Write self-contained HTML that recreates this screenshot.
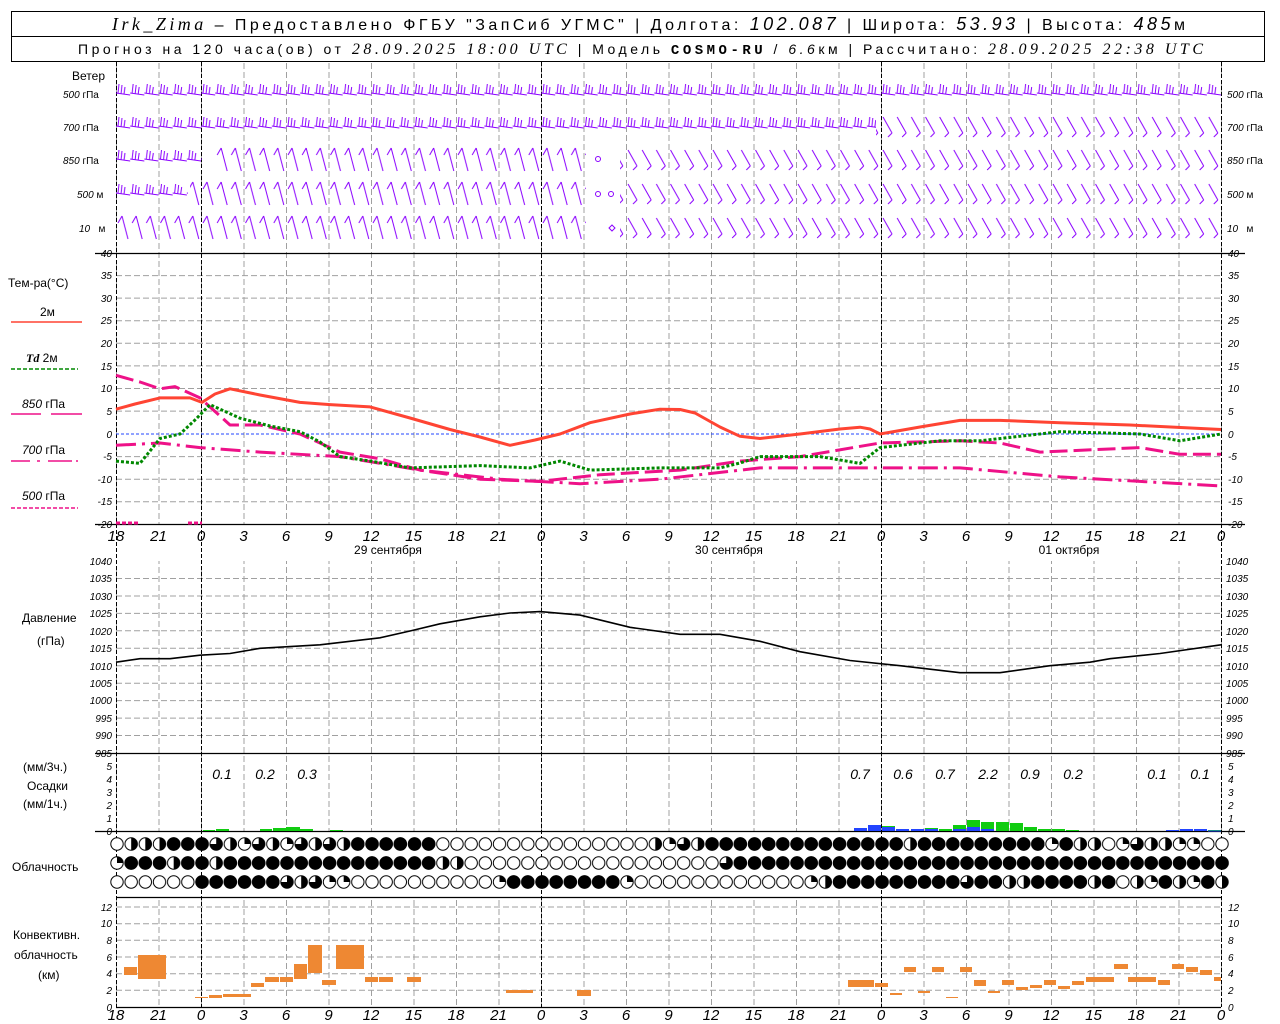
<!DOCTYPE html>
<html><head><meta charset="utf-8"><style>
html,body{margin:0;padding:0;background:#fff;}
svg{display:block}
.l{font-family:"Liberation Sans",sans-serif;font-size:12px;fill:#000}
.t{font-family:"Liberation Sans",sans-serif;font-size:10px;font-style:italic;fill:#000}
.x{font-family:"Liberation Sans",sans-serif;font-size:15px;font-style:italic;fill:#000}
.p{font-family:"Liberation Sans",sans-serif;font-size:14px;font-style:italic;fill:#000}
</style></head><body>
<svg width="1280" height="1024" viewBox="0 0 1280 1024" xmlns="http://www.w3.org/2000/svg">
<defs>
<pattern id="vg" patternUnits="userSpaceOnUse" x="116" y="0" width="42.5" height="1024">
<line x1="0.5" y1="0" x2="0.5" y2="1024" stroke="#a0a0a0" stroke-dasharray="6,3"/>
</pattern>
<pattern id="co" patternUnits="userSpaceOnUse" x="110" y="-7" width="14.1667" height="14">
<circle cx="7" cy="7" r="6.2" fill="#fff" stroke="#000" stroke-width="1"/>
</pattern>
<pattern id="cf" patternUnits="userSpaceOnUse" x="110" y="-7" width="14.1667" height="14">
<circle cx="7" cy="7" r="6.2" fill="#000" stroke="#000" stroke-width="1"/>
</pattern>
<pattern id="bh" patternUnits="userSpaceOnUse" x="116" y="-20" width="14.1667" height="30">
<g stroke="#8a00ff" stroke-width="1" fill="none">
<line x1="0" y1="19" x2="14.2" y2="21"/>
<line x1="2" y1="19" x2="3" y2="10"/><line x1="5" y1="20" x2="6" y2="11"/><line x1="8" y1="20" x2="9" y2="13"/>
</g></pattern>
<pattern id="ba" patternUnits="userSpaceOnUse" x="116" y="-15" width="14.1667" height="30">
<g stroke="#8a00ff" stroke-width="1" fill="none">
<line x1="6" y1="3" x2="12" y2="26"/><line x1="6" y1="3" x2="2" y2="10"/>
</g></pattern>
<pattern id="bb" patternUnits="userSpaceOnUse" x="116" y="-15" width="14.1667" height="30">
<g stroke="#8a00ff" stroke-width="1" fill="none">
<line x1="2" y1="5" x2="11" y2="21"/><line x1="11" y1="21" x2="7" y2="25"/>
</g></pattern>
<path id="h" d="M0,-6.2A6.2,6.2 0 0 1 0,6.2Z" fill="#000"/>
<path id="q" d="M0,0V-6.2A6.2,6.2 0 0 1 6.2,0Z" fill="#000"/>
<path id="tq" d="M0,0V-6.2A6.2,6.2 0 1 1 -6.2,0Z" fill="#000"/>
</defs>

<!-- header -->
<rect x="11.5" y="11.5" width="1253" height="50" fill="none" stroke="#000"/>
<line x1="11" y1="36.5" x2="1265" y2="36.5" stroke="#000"/>
<text x="112" y="30" font-family="Liberation Sans,sans-serif" font-size="16" textLength="1073" lengthAdjust="spacing"><tspan font-family="Liberation Serif,serif" font-style="italic" font-size="18">Irk_Zima</tspan> – Предоставлено ФГБУ "ЗапСиб УГМС" | Долгота: <tspan font-style="italic" font-size="18">102.087</tspan> | Широта: <tspan font-style="italic" font-size="18">53.93</tspan> | Высота: <tspan font-style="italic" font-size="18">485</tspan>м</text>
<text x="78" y="54" font-family="Liberation Sans,sans-serif" font-size="14" textLength="1125" lengthAdjust="spacing">Прогноз на 120 часа(ов) от <tspan font-style="italic" font-family="Liberation Serif,serif" font-size="16">28.09.2025 18:00 UTC</tspan>  | Модель <tspan font-weight="bold" font-family="Liberation Mono,monospace">COSMO-RU</tspan> / <tspan font-style="italic">6.6</tspan>км | Рассчитано: <tspan font-style="italic" font-family="Liberation Serif,serif" font-size="16">28.09.2025 22:38 UTC</tspan></text>

<!-- vertical gray grid -->
<rect x="116" y="62" width="1106" height="191" fill="url(#vg)"/>
<rect x="116" y="253" width="1106" height="271" fill="url(#vg)"/>
<rect x="116" y="561" width="1106" height="192" fill="url(#vg)"/>
<rect x="116" y="753" width="1106" height="78" fill="url(#vg)"/>
<rect x="116" y="897" width="1106" height="110" fill="url(#vg)"/>

<!-- horizontal grid -->
<g stroke="#a0a0a0" stroke-dasharray="6,3" fill="none">
<path d="M116 275.6H1221M116 298.1H1221M116 320.7H1221M116 343.3H1221M116 365.9H1221M116 388.5H1221M116 411.1H1221M116 456.6H1221M116 479.2H1221M116 501.8H1221"/>
<path d="M116 578.5H1221M116 596H1221M116 613.4H1221M116 630.8H1221M116 648.3H1221M116 665.7H1221M116 683.2H1221M116 700.6H1221M116 718.1H1221M116 735.5H1221"/>
<path d="M116 907H1221M116 923.7H1221M116 940.3H1221M116 957H1221M116 973.7H1221M116 990.3H1221"/>
</g>
<g stroke="#000" stroke-dasharray="4,2">
<path d="M201.5 62V1007M541.5 62V1007M881.5 62V1007M116.5 62V1007M1221.5 62V1007"/>
</g>
<g stroke="#000" stroke-width="1.2">
<path d="M95 253.5H1245M95 524.5H1245M95 753.5H1245M95 831.5H1245M116 897.5H1221M116 1007.5H1221"/>
</g>

<!-- wind -->
<text class="l" x="72" y="80">Ветер</text>
<text class="t" x="63" y="98">500 <tspan font-style="normal">гПа</tspan></text>
<text class="t" x="63" y="131">700 <tspan font-style="normal">гПа</tspan></text>
<text class="t" x="63" y="164">850 <tspan font-style="normal">гПа</tspan></text>
<text class="t" x="77" y="198">500 <tspan font-style="normal">м</tspan></text>
<text class="t" x="79" y="232">10 <tspan font-style="normal">&#160;&#160;м</tspan></text>
<text class="t" x="1227" y="98">500 <tspan font-style="normal">гПа</tspan></text>
<text class="t" x="1227" y="131">700 <tspan font-style="normal">гПа</tspan></text>
<text class="t" x="1227" y="164">850 <tspan font-style="normal">гПа</tspan></text>
<text class="t" x="1227" y="198">500 <tspan font-style="normal">м</tspan></text>
<text class="t" x="1227" y="232">10 <tspan font-style="normal">&#160;&#160;м</tspan></text>
<g transform="translate(0,94)"><rect x="116" y="-20" width="1105" height="30" fill="url(#bh)"/></g>
<g transform="translate(0,127)"><rect x="116" y="-20" width="760" height="30" fill="url(#bh)"/><rect x="876" y="-15" width="345" height="30" fill="url(#bb)"/></g>
<g transform="translate(0,160)"><rect x="116" y="-20" width="86" height="30" fill="url(#bh)"/><rect x="216" y="-15" width="370" height="30" fill="url(#ba)"/><rect x="620" y="-15" width="601" height="30" fill="url(#bb)"/></g>
<g transform="translate(0,194)"><rect x="116" y="-20" width="72" height="30" fill="url(#bh)"/><rect x="190" y="-15" width="396" height="30" fill="url(#ba)"/><rect x="620" y="-15" width="601" height="30" fill="url(#bb)"/></g>
<g transform="translate(0,228)"><rect x="116" y="-15" width="470" height="30" fill="url(#ba)"/><rect x="620" y="-15" width="601" height="30" fill="url(#bb)"/></g>
<g fill="none" stroke="#8a00ff"><circle cx="598" cy="159" r="2.5"/><circle cx="598" cy="194" r="2.5"/><circle cx="611" cy="194" r="2.5"/><path d="M612 225l3 3-3 3-3-3z"/></g>

<!-- temperature -->
<text class="l" x="8" y="287">Тем-ра(°С)</text>
<text class="l" x="40" y="316">2м</text>
<line x1="11" y1="322" x2="82" y2="322" stroke="#ff4433" stroke-width="1.5"/>
<text class="l" x="26" y="362"><tspan font-style="italic" font-weight="bold" font-family="Liberation Serif,serif">Td</tspan>  2м</text>
<line x1="11" y1="369" x2="78" y2="369" stroke="#008800" stroke-width="1.5" stroke-dasharray="4,2"/>
<text class="l" x="22" y="408"><tspan font-style="italic">850</tspan> гПа</text>
<path d="M11 414H41M51 414H82" stroke="#ee1188" stroke-width="1.5"/>
<text class="l" x="22" y="454"><tspan font-style="italic">700</tspan> гПа</text>
<path d="M11 461H30M37 461H40M48 461H72M76 461H78" stroke="#ee1188" stroke-width="1.5"/>
<text class="l" x="22" y="500"><tspan font-style="italic">500</tspan> гПа</text>
<line x1="11" y1="508" x2="78" y2="508" stroke="#ee1188" stroke-width="1.5" stroke-dasharray="4,2"/>
<g class="t" text-anchor="end">
<text x="112" y="257">40</text><text x="112" y="279">35</text><text x="112" y="302">30</text><text x="112" y="324">25</text><text x="112" y="347">20</text><text x="112" y="370">15</text><text x="112" y="392">10</text><text x="112" y="415">5</text><text x="112" y="438">0</text><text x="112" y="460">-5</text><text x="112" y="483">-10</text><text x="112" y="505">-15</text><text x="112" y="528">-20</text>
</g>
<g class="t">
<text x="1228" y="257">40</text><text x="1228" y="279">35</text><text x="1228" y="302">30</text><text x="1228" y="324">25</text><text x="1228" y="347">20</text><text x="1228" y="370">15</text><text x="1228" y="392">10</text><text x="1228" y="415">5</text><text x="1228" y="438">0</text><text x="1228" y="460">-5</text><text x="1228" y="483">-10</text><text x="1228" y="505">-15</text><text x="1228" y="528">-20</text>
</g>
<line x1="116" y1="434" x2="1221" y2="434" stroke="#2244ff" stroke-dasharray="3,2"/>
<g fill="none" stroke-linejoin="round">
<polyline stroke="#ee1188" stroke-width="3" stroke-dasharray="18,6" points="116,375.3 140,382 160,388.8 175,386.6 200,397.9 230,425 260,425 300,434 340,452.1 380,458.8 420,470.1 480,479.2 540,481.4 600,474.7 680,470.1 740,461.1 800,456.6 880,443 960,440.8 1000,443 1040,452.1 1140,447.6 1180,454.3 1221,454.3"/>
<polyline stroke="#ee1188" stroke-width="3" stroke-dasharray="20,6,3,6" points="116,445.3 160,443 200,447.6 260,452.1 340,456.6 420,470.1 500,479.2 580,483.7 660,479.2 760,467.9 880,467.9 960,467.9 1060,476.9 1140,481.4 1221,486"/>
<polyline stroke="#ff4433" stroke-width="3" points="116,409.2 135,404 160,397.9 190,397.9 202,402.4 215,394 230,388.8 260,395 300,402.4 330,404.6 370,406.9 410,418 450,429.5 480,437 510,445.3 535,440 560,434 590,422.7 630,414 660,409.2 680,409.5 695,413 720,427 740,436.3 760,438.5 800,434 840,429 860,427.2 870,429 880,434 920,427 960,420.4 1000,420.4 1060,422.7 1130,425 1221,429.5"/>
<polyline stroke="#008800" stroke-width="3" stroke-dasharray="3,2" points="116,461.1 140,463.4 160,438.5 180,434 195,420 210,404.6 240,418.2 270,426 300,431.7 320,442 340,456.6 370,461 410,467.9 480,465.6 530,467.9 560,461.1 590,470.1 660,467.9 720,467.9 740,463 760,456.6 820,456.6 860,463.4 880,447.6 940,440.8 980,440.8 1060,431.7 1140,434 1180,440.8 1221,434"/>
<path d="M116 523H140M188 523H202" stroke="#ee1188" stroke-width="3" stroke-dasharray="4,2"/>
</g>
<g class="x" text-anchor="middle">
<text x="116" y="541">18</text><text x="158.5" y="541">21</text><text x="201" y="541">0</text><text x="243.5" y="541">3</text><text x="286" y="541">6</text><text x="328.5" y="541">9</text><text x="371" y="541">12</text><text x="413.5" y="541">15</text><text x="456" y="541">18</text><text x="498.5" y="541">21</text><text x="541" y="541">0</text><text x="583.5" y="541">3</text><text x="626" y="541">6</text><text x="668.5" y="541">9</text><text x="711" y="541">12</text><text x="753.5" y="541">15</text><text x="796" y="541">18</text><text x="838.5" y="541">21</text><text x="881" y="541">0</text><text x="923.5" y="541">3</text><text x="966" y="541">6</text><text x="1008.5" y="541">9</text><text x="1051" y="541">12</text><text x="1093.5" y="541">15</text><text x="1136" y="541">18</text><text x="1178.5" y="541">21</text><text x="1221" y="541">0</text>
</g>
<g class="l" text-anchor="middle" font-size="12">
<text x="388" y="554">29 сентября</text><text x="729" y="554">30 сентября</text><text x="1069" y="554">01 октября</text>
</g>

<!-- pressure -->
<text class="l" x="22" y="622">Давление</text>
<text class="l" x="37" y="645">(гПа)</text>
<g class="t" text-anchor="end">
<text x="112" y="565">1040</text><text x="112" y="582">1035</text><text x="112" y="600">1030</text><text x="112" y="617">1025</text><text x="112" y="635">1020</text><text x="112" y="652">1015</text><text x="112" y="670">1010</text><text x="112" y="687">1005</text><text x="112" y="704">1000</text><text x="112" y="722">995</text><text x="112" y="739">990</text><text x="112" y="757">985</text>
</g>
<g class="t">
<text x="1226" y="565">1040</text><text x="1226" y="582">1035</text><text x="1226" y="600">1030</text><text x="1226" y="617">1025</text><text x="1226" y="635">1020</text><text x="1226" y="652">1015</text><text x="1226" y="670">1010</text><text x="1226" y="687">1005</text><text x="1226" y="704">1000</text><text x="1226" y="722">995</text><text x="1226" y="739">990</text><text x="1226" y="757">985</text>
</g>
<polyline fill="none" stroke="#000" stroke-width="1.6" points="116,662.2 140,658.7 170,658.7 200,655.2 230,653.5 260,648.3 320,644.8 380,637.8 410,631 440,623.8 480,616.8 510,613 540,611.6 580,615.1 630,627.3 680,634.3 720,634.3 760,641.3 800,651.7 850,660.5 900,665.7 960,672.7 1000,672.7 1050,665.7 1090,662.2 1110,658.7 1160,653.5 1221,644.8"/>

<!-- precip -->
<text class="l" x="23" y="771">(мм/3ч.)</text>
<text class="l" x="27" y="790">Осадки</text>
<text class="l" x="23" y="808">(мм/1ч.)</text>
<g class="t" text-anchor="end">
<text x="112" y="770">5</text><text x="112" y="783">4</text><text x="112" y="796">3</text><text x="112" y="809">2</text><text x="112" y="822">1</text><text x="112" y="835">0</text>
</g>
<g class="t">
<text x="1228" y="770">5</text><text x="1228" y="783">4</text><text x="1228" y="796">3</text><text x="1228" y="809">2</text><text x="1228" y="822">1</text><text x="1228" y="835">0</text>
</g>
<g class="p" text-anchor="middle">
<text x="222" y="779">0.1</text><text x="265" y="779">0.2</text><text x="307" y="779">0.3</text>
<text x="860" y="779">0.7</text><text x="903" y="779">0.6</text><text x="945" y="779">0.7</text><text x="988" y="779">2.2</text><text x="1030" y="779">0.9</text><text x="1073" y="779">0.2</text><text x="1157" y="779">0.1</text><text x="1200" y="779">0.1</text>
</g>
<g fill="#11cc11">
<rect x="203" y="830" width="12" height="1"/><rect x="216" y="829" width="13" height="2"/><rect x="260" y="829" width="12" height="2"/><rect x="273" y="828" width="13" height="3"/><rect x="286" y="827" width="14" height="4"/><rect x="300" y="829" width="13" height="2"/><rect x="330" y="830" width="13" height="1"/>
<rect x="882" y="826" width="13" height="5"/><rect x="925" y="828" width="13" height="3"/><rect x="939" y="829" width="13" height="2"/><rect x="953" y="825" width="13" height="6"/><rect x="967" y="820" width="13" height="11"/><rect x="981" y="822" width="13" height="9"/><rect x="996" y="822" width="13" height="9"/><rect x="1010" y="823" width="13" height="8"/><rect x="1024" y="827" width="13" height="4"/><rect x="1038" y="829" width="13" height="2"/><rect x="1052" y="829" width="13" height="2"/><rect x="1066" y="830" width="13" height="1"/><rect x="1208" y="830" width="13" height="1"/>
</g>
<g fill="#2244ff">
<rect x="854" y="828" width="13" height="3"/><rect x="868" y="825" width="13" height="6"/><rect x="882" y="827" width="13" height="4"/><rect x="896" y="829" width="13" height="2"/><rect x="911" y="829" width="13" height="2"/><rect x="925" y="829" width="13" height="2"/><rect x="953" y="829" width="13" height="2"/><rect x="967" y="827" width="13" height="4"/><rect x="981" y="829" width="13" height="2"/><rect x="1166" y="830" width="13" height="1"/><rect x="1180" y="829" width="13" height="2"/><rect x="1194" y="829" width="13" height="2"/><rect x="1208" y="830.5" width="13" height="1"/>
</g>

<!-- cloudiness -->
<text class="l" x="12" y="871">Облачность</text>
<g transform="translate(0,844)">
<rect x="110" y="-7" width="1119" height="14" fill="url(#co)"/>
<rect x="166.7" y="-7" width="42.5" height="14" fill="url(#cf)"/>
<rect x="350.8" y="-7" width="85" height="14" fill="url(#cf)"/>
<rect x="705" y="-7" width="198.3" height="14" fill="url(#cf)"/>
<rect x="917.5" y="-7" width="127.5" height="14" fill="url(#cf)"/>
<rect x="1059.2" y="-7" width="14.17" height="14" fill="url(#cf)"/>
<use href="#h" x="131.2"/><use href="#h" x="145.3"/><use href="#h" x="159.5"/><use href="#tq" x="216.2"/><use href="#h" x="230.3"/><use href="#q" x="244.5"/><use href="#tq" x="258.7"/><use href="#h" x="272.8"/><use href="#q" x="287"/><use href="#tq" x="301.2"/><use href="#h" x="315.3"/><use href="#tq" x="329.5"/><use href="#h" x="343.7"/>
<use href="#h" x="655.3"/><use href="#q" x="669.5"/><use href="#tq" x="683.7"/><use href="#h" x="697.8"/><use href="#h" x="910.3"/><use href="#q" x="1052"/><use href="#h" x="1080.3"/><use href="#h" x="1094.5"/><use href="#q" x="1122.8"/><use href="#tq" x="1137"/><use href="#h" x="1151.2"/><use href="#h" x="1165.3"/><use href="#q" x="1179.5"/><use href="#q" x="1193.7"/>
</g>
<g transform="translate(0,863)">
<rect x="110" y="-7" width="1119" height="14" fill="url(#co)"/>
<rect x="124.2" y="-7" width="42.5" height="14" fill="url(#cf)"/>
<rect x="180.8" y="-7" width="28.33" height="14" fill="url(#cf)"/>
<rect x="223.3" y="-7" width="212.5" height="14" fill="url(#cf)"/>
<rect x="733.3" y="-7" width="495.8" height="14" fill="url(#cf)"/>
<use href="#q" x="117"/><use href="#h" x="173.7"/><use href="#h" x="216.2"/><use href="#h" x="442.8"/><use href="#h" x="457"/><use href="#tq" x="726.2"/>
</g>
<g transform="translate(0,882)">
<rect x="110" y="-7" width="1119" height="14" fill="url(#co)"/>
<rect x="195" y="-7" width="85" height="14" fill="url(#cf)"/>
<rect x="506.7" y="-7" width="113.3" height="14" fill="url(#cf)"/>
<rect x="832.5" y="-7" width="127.5" height="14" fill="url(#cf)"/>
<rect x="974.2" y="-7" width="28.33" height="14" fill="url(#cf)"/>
<rect x="1030.8" y="-7" width="56.67" height="14" fill="url(#cf)"/>
<rect x="1101.7" y="-7" width="14.17" height="14" fill="url(#cf)"/>
<rect x="1158.3" y="-7" width="14.17" height="14" fill="url(#cf)"/>
<rect x="1200.8" y="-7" width="14.17" height="14" fill="url(#cf)"/>
<use href="#tq" x="287"/><use href="#h" x="301.2"/><use href="#tq" x="315.3"/><use href="#q" x="329.5"/><use href="#q" x="343.7"/><use href="#q" x="499.5"/><use href="#q" x="627"/><use href="#q" x="811.2"/><use href="#h" x="825.3"/><use href="#tq" x="967"/><use href="#h" x="1009.5"/><use href="#h" x="1023.7"/><use href="#h" x="1094.5"/><use href="#h" x="1137"/><use href="#q" x="1151.2"/><use href="#h" x="1179.5"/><use href="#q" x="1193.7"/><use href="#h" x="1222"/>
</g>

<!-- convective -->
<text class="l" x="13" y="939">Конвективн.</text>
<text class="l" x="14" y="959">облачность</text>
<text class="l" x="38" y="979">(км)</text>
<g class="t" text-anchor="end">
<text x="112" y="911">12</text><text x="112" y="927">10</text><text x="112" y="944">8</text><text x="112" y="961">6</text><text x="112" y="977">4</text><text x="112" y="994">2</text><text x="112" y="1011">0</text>
</g>
<g class="t">
<text x="1228" y="911">12</text><text x="1228" y="927">10</text><text x="1228" y="944">8</text><text x="1228" y="961">6</text><text x="1228" y="977">4</text><text x="1228" y="994">2</text><text x="1228" y="1011">0</text>
</g>
<g fill="#ee8833">
<rect x="124" y="967" width="13" height="8"/><rect x="138" y="955" width="28" height="24"/><rect x="195" y="997" width="13" height="1"/><rect x="209" y="995" width="13" height="3"/><rect x="223" y="994" width="28" height="3"/><rect x="251" y="983" width="13" height="4"/><rect x="265" y="977" width="14" height="5"/><rect x="280" y="977" width="13" height="5"/><rect x="294" y="964" width="13" height="15"/><rect x="308" y="945" width="14" height="28"/><rect x="322" y="980" width="14" height="5"/><rect x="336" y="945" width="28" height="24"/><rect x="365" y="977" width="13" height="5"/><rect x="379" y="977" width="14" height="5"/><rect x="407" y="977" width="14" height="5"/><rect x="506" y="990" width="27" height="3"/><rect x="577" y="990" width="14" height="6"/>
<rect x="848" y="980" width="26" height="7"/><rect x="875" y="983" width="13" height="4"/><rect x="890" y="993" width="12" height="2"/><rect x="904" y="967" width="12" height="5"/><rect x="918" y="991" width="12" height="2"/><rect x="932" y="967" width="12" height="5"/><rect x="946" y="997" width="12" height="1"/><rect x="960" y="967" width="12" height="5"/><rect x="974" y="980" width="12" height="6"/><rect x="988" y="991" width="12" height="2"/><rect x="1002" y="980" width="12" height="5"/><rect x="1016" y="987" width="12" height="3"/><rect x="1030" y="985" width="12" height="3"/><rect x="1044" y="980" width="12" height="5"/><rect x="1058" y="986" width="12" height="3"/><rect x="1072" y="981" width="12" height="4"/><rect x="1086" y="977" width="28" height="5"/><rect x="1114" y="964" width="14" height="5"/><rect x="1128" y="977" width="28" height="5"/><rect x="1158" y="980" width="12" height="5"/><rect x="1172" y="964" width="12" height="5"/><rect x="1186" y="967" width="12" height="5"/><rect x="1200" y="970" width="12" height="5"/><rect x="1214" y="977" width="7" height="4"/>
</g>
<g class="x" text-anchor="middle">
<text x="116" y="1020">18</text><text x="158.5" y="1020">21</text><text x="201" y="1020">0</text><text x="243.5" y="1020">3</text><text x="286" y="1020">6</text><text x="328.5" y="1020">9</text><text x="371" y="1020">12</text><text x="413.5" y="1020">15</text><text x="456" y="1020">18</text><text x="498.5" y="1020">21</text><text x="541" y="1020">0</text><text x="583.5" y="1020">3</text><text x="626" y="1020">6</text><text x="668.5" y="1020">9</text><text x="711" y="1020">12</text><text x="753.5" y="1020">15</text><text x="796" y="1020">18</text><text x="838.5" y="1020">21</text><text x="881" y="1020">0</text><text x="923.5" y="1020">3</text><text x="966" y="1020">6</text><text x="1008.5" y="1020">9</text><text x="1051" y="1020">12</text><text x="1093.5" y="1020">15</text><text x="1136" y="1020">18</text><text x="1178.5" y="1020">21</text><text x="1221" y="1020">0</text>
</g>
</svg>
</body></html>
